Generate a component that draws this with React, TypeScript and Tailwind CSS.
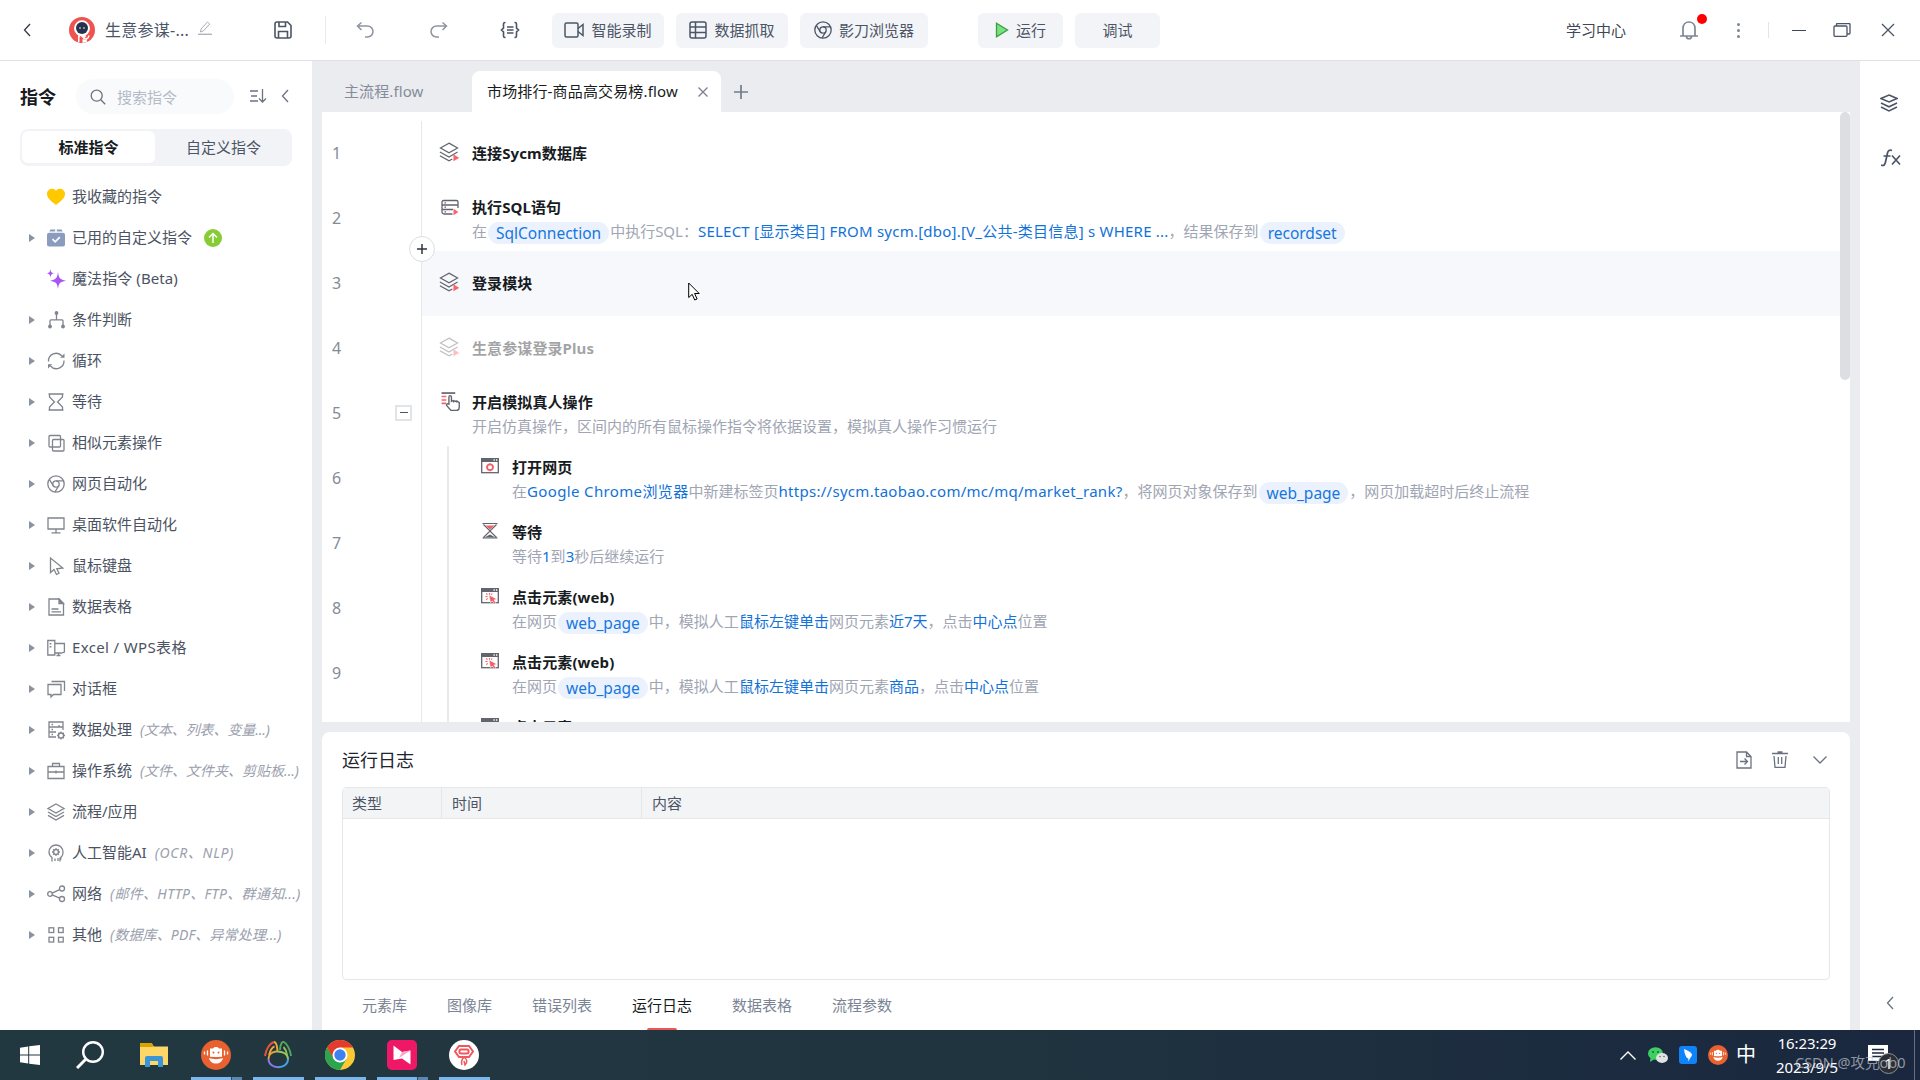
import React from 'react';
import clsx from 'clsx';

type IconProps = { className?: string; children?: React.ReactNode; box?: string };

const Icon: React.FC<IconProps> = ({ className = '', children, box = '0 0 18 18' }) => (
  <svg
    viewBox={box}
    fill="none"
    stroke="currentColor"
    strokeWidth={1.3}
    className={clsx('shrink-0', className || 'w-[18px] h-[18px]')}
  >
    {children}
  </svg>
);

const LayersShape = () => (
  <>
    <path d="M9 1 17 5.5 9 10 1 5.5z" />
    <path d="M1 9l8 4.5L17 9M1 12.4 9 17l8-4.6" />
  </>
);

const ChromeShape = () => (
  <>
    <circle cx="9" cy="9" r="8.2" />
    <circle cx="9" cy="9" r="3.2" />
    <path d="M9 5.8h7.4M6.2 10.6 2.3 4.4M11.8 10.6 8 17" />
  </>
);

const Chevron = ({ className }: { className?: string }) => (
  <Icon box="0 0 8 14" className={className || 'w-2 h-3.5'}>
    <path d="M7 1 1.5 7 7 13" />
  </Icon>
);

interface TreeItem {
  label: string;
  labelClass?: string;
  note?: string;
  noteClass?: string;
  leaf?: boolean;
  badge?: boolean;
  icon: React.ReactNode;
}

const treeItems: TreeItem[] = [
  {
    label: '我收藏的指令',
    leaf: true,
    icon: <path d="M9 17C4 13.2 0 10 0 6c0-5 6-7 9-3.300C12-1 18 1 18 6c0 4-4 7.200-9 11z" fill="#ffc800" stroke="none" />,
  },
  {
    label: '已用的自定义指令',
    badge: true,
    icon: (
      <g stroke="none" fill="#8a9bbd">
        <path d="M3.500.500h4.700v2H2.300zM9.800.500h4.700l1.200 2H9.800z" />
        <rect x="0" y="3.800" width="18" height="13.700" rx="2" />
        <path d="M5.500 10.200l2.700 2.600 4.600-4.600" stroke="#fff" strokeWidth="1.700" fill="none" />
      </g>
    ),
  },
  {
    label: '魔法指令 (Beta)',
    labelClass: 'tracking-[0.08px]',
    leaf: true,
    icon: (
      <g stroke="none" fill="#a855f7">
        <path d="M11 2c.8 6 2 7.700 8 8.700-6 1-7.200 2.300-8 8.300-.8-6-2-7.300-8-8.300 6-1 7.200-2.700 8-8.700z" />
        <path d="M3.500-1c.500 3.200 1 3.900 4 4.300-3 .500-3.500 1.200-4 4.300-.500-3.100-1-3.800-4.300-4.300C2.500 2.900 3 2.200 3.500-1z" />
      </g>
    ),
  },
  {
    label: '条件判断',
    icon: (
      <>
        <path d="M9.500 2.500v6.300M3 15V9.800a1 1 0 0 1 1-1h11a1 1 0 0 1 1 1V15" />
        <g fill="currentColor" stroke="none">
          <circle cx="9.500" cy="2" r="1.900" />
          <circle cx="3" cy="15.500" r="1.900" />
          <circle cx="16" cy="15.500" r="1.900" />
        </g>
      </>
    ),
  },
  {
    label: '循环',
    icon: (
      <>
        <path d="M1.500 9.500A7.700 7.700 0 0 1 15 4M17 8.500A7.700 7.700 0 0 1 3.500 14" />
        <path d="M17.500 1.500v4.300h-4.300zM1 16.500v-4.300h4.300z" fill="currentColor" stroke="none" />
      </>
    ),
  },
  {
    label: '等待',
    icon: <path d="M1.500 1h15M1.500 17h15M2.500 1v3l5 5-5 5v3M15.500 1v3l-5 5 5 5v3" />,
  },
  {
    label: '相似元素操作',
    icon: (
      <>
        <rect x="2" y="1.500" width="11.500" height="11.500" rx="1" />
        <rect x="5.500" y="5.500" width="11.500" height="11.500" rx="1" />
      </>
    ),
  },
  { label: '网页自动化', icon: <ChromeShape /> },
  {
    label: '桌面软件自动化',
    icon: <path d="M1 2h16v11H1zM9 13v3.500M4.500 16.800h9" />,
  },
  {
    label: '鼠标键盘',
    icon: <path d="M3.500 1v14.500l3.500-3 2.500 5 2.500-1.200-2.200-4.500 6-.800z" />,
  },
  {
    label: '数据表格',
    icon: (
      <>
        <path d="M2 1h10l4.500 4.500V17H2z" />
        <path d="M12 1l4.500 4.500H12z" fill="currentColor" />
        <path d="M4.500 11h7M4.500 13.800h9.500" />
      </>
    ),
  },
  {
    label: 'Excel / WPS表格',
    labelClass: 'tracking-[0.36px]',
    icon: (
      <>
        <path d="M.800 1.500h7v14.500h-7zM7.800 4.500h9.600v8.500l-3 1H7.800M9.500 16.500h4M11.500 14v2.500" />
        <path d="M3.500 4v1.500M3.500 7v1.500" strokeWidth="1.800" />
      </>
    ),
  },
  {
    label: '对话框',
    icon: <path d="M1 4.500h13v10H6.500L4 17v-2.500H1zM4.500 1.500h13V11" />,
  },
  {
    label: '数据处理',
    note: '(文本、列表、变量...)',
    noteClass: 'tracking-[-0.1px]',
    icon: (
      <>
        <path d="M9 16H2V1h14v8M2 6h14M2 11h7M4.500 3.500h1.500M4.500 8.500h1.500M4.500 13.500h1.500M12 6v-2" />
        <circle cx="14" cy="14.500" r="2.500" />
        <path d="M14 10.500v1.500M14 17v1.500M10 14.500h1.500M16.500 14.500H18M11.300 11.800l1 1M15.800 16.300l1 1M16.800 11.800l-1 1M12.200 16.300l-1 1" />
      </>
    ),
  },
  {
    label: '操作系统',
    note: '(文件、文件夹、剪贴板...)',
    icon: <path d="M1 4.500h16v12H1zM5.500 4.500v-3h7v3M1 10h16M9 8.500v3" />,
  },
  { label: '流程/应用', icon: <LayersShape /> },
  {
    label: '人工智能AI',
    note: '(OCR、NLP)',
    noteClass: 'tracking-[0.7px]',
    icon: (
      <>
        <path d="M5 17.500v-4C3 12 2 10.500 2 8a7 7 0 0 1 14 0c0 3-1 5-3 6v3.500M13 15h1.500M8 17v-2.500M11 17v-3" />
        <circle cx="9" cy="8" r="2.400" />
        <path d="M9 4v1.600M9 10.400V12M5 8h1.600M11.400 8H13M6.200 5.200l1.100 1.100M10.700 9.700l1.100 1.100M11.800 5.200l-1.100 1.100M7.300 9.700l-1.100 1.100" />
      </>
    ),
  },
  {
    label: '网络',
    note: '(邮件、HTTP、FTP、群通知...)',
    noteClass: 'tracking-[0.32px]',
    icon: (
      <>
        <circle cx="3" cy="9" r="2.300" />
        <circle cx="15" cy="3.500" r="2.500" />
        <circle cx="15" cy="14" r="2.500" />
        <path d="M5.200 8.200 12.600 4.600M5.200 9.800l7.400 3.400" />
      </>
    ),
  },
  {
    label: '其他',
    note: '(数据库、PDF、异常处理...)',
    noteClass: 'tracking-[0.15px]',
    icon: (
      <>
        <rect x="2" y="1.800" width="4.700" height="4.700" />
        <rect x="11.500" y="1.800" width="4.700" height="4.700" />
        <rect x="2" y="11.300" width="4.700" height="4.700" />
        <rect x="11.500" y="11.300" width="4.700" height="4.700" />
      </>
    ),
  },
];

const FlowLayers = () => (
  <Icon className="w-5 h-5 -ml-px">
    <g strokeWidth="1.100">
      <path d="M9 1 16.700 5.400 9 9.800 1.300 5.400z" />
      <path d="M.800 9 9 13.500 16.700 9M.800 12.400 9 17l3-1.700" />
    </g>
    <path d="M13 11l5.200 3.200L13 17.400z" fill="#f9636b" stroke="none" />
  </Icon>
);

const SqlIcon = () => (
  <Icon className="w-[19px] h-[18px] mt-1">
    <path d="M12 15H3.500a2 2 0 0 1-2-2V3a1.500 1.500 0 0 1 1.500-1.500h13a1.500 1.500 0 0 1 1.500 1.500v6M1.500 6h16M1.500 10.500h11M4 3.800h1.500M4 8.200h1.500M4 12.800h1.500" />
    <path d="M13 9.800l4.800 3.200-4.800 3.200z" fill="#f9636b" stroke="none" />
  </Icon>
);

const HumanIcon = () => (
  <Icon className="w-[19px] h-[19px] ml-px">
    <path d="M.500 1h13" strokeWidth="1.600" />
    <path d="M.500 4.200H5M.500 7.500H5M.500 10.800H5" stroke="#f9636b" strokeWidth="1.500" />
    <path d="M7.500 11.500V4.800c0-1.800 2.400-1.800 2.400 0v4l1.600-.800 1.800.800 1.700-.300 2.300 1.500v4.500c0 2-1 3-2.500 3H9.500L5.500 13c-.800-1.500.500-2.300 2-1.500zM12 8v2M14.800 8.500V10" />
  </Icon>
);

const WindowShape = () => (
  <>
    <rect x=".700" y="1.700" width="16.600" height="14" />
    <path d="M0 1h18v4H0z" fill="currentColor" stroke="none" />
    <path d="M12.500 3h1.300M15 3h1.300" stroke="#fff" />
  </>
);

const OpenPageIcon = () => (
  <Icon>
    <WindowShape />
    <circle cx="9" cy="10.200" r="2.900" stroke="#f05f67" strokeWidth="1.700" />
    <path d="M9 6.300v2M9 12.200v2M5 10.200h2M11 10.200h2" stroke="#f05f67" />
  </Icon>
);

const ClickIcon = () => (
  <Icon>
    <WindowShape />
    <path d="M8 8l8 4.200-3 .700 2 3.200-1.700 1-2-3.200-1.800 2z" fill="#f05f67" stroke="#fff" strokeWidth=".500" />
    <path d="M8.500 6v1.700M4.500 9.500h2M5.200 6.500l1.300 1.200M5.300 12.700l1.400-1.300M11.300 6.500 10.200 7.700" stroke="#f05f67" strokeWidth="1.100" />
  </Icon>
);

const WaitIcon = () => (
  <Icon>
    <path d="M1.500 1.500h15M1.500 16h15M2.500 2.500 9 9l6.500-6.500M2.500 15.500 9 9l6.500 6.500" strokeWidth="1.200" />
    <path d="M4.500 3.500h9L9 7.500z" fill="#f05f67" stroke="none" />
    <path d="M3.500 15.500 9 12.500l5.500 3z" fill="currentColor" stroke="none" />
  </Icon>
);

const Chip = ({ children }: { children: string }) => (
  <span className="inline-flex items-center h-[22px] px-2 mx-px rounded-full bg-[#ebf2fd] text-[#1677e0] text-[15.500px] align-middle">
    {children}
  </span>
);

const Blue = ({ children, className }: { children: string; className?: string }) => (
  <span className={clsx('text-[#1172d8]', className)}>{children}</span>
);

const clickDesc = (target: string) => (
  <>
    在网页<Chip>web_page</Chip>中，模拟人工<Blue>鼠标左键单击</Blue>网页元素<Blue>{target}</Blue>，点击
    <Blue>中心点</Blue>位置
  </>
);

interface Step {
  title: string;
  icon: React.ReactNode;
  desc?: React.ReactNode;
  nested?: boolean;
  active?: boolean;
  disabled?: boolean;
  fold?: boolean;
  last?: boolean;
}

const steps: Step[] = [
  { title: '连接Sycm数据库', icon: <FlowLayers /> },
  {
    title: '执行SQL语句',
    icon: <SqlIcon />,
    desc: (
      <>
        在<Chip>SqlConnection</Chip>中执行SQL：
        <Blue className="tracking-[0.23px]">
          SELECT [显示类目] FROM sycm.[dbo].[V_公共-类目信息] s WHERE ...
        </Blue>
        ，结果保存到<Chip>recordset</Chip>
      </>
    ),
  },
  { title: '登录模块', icon: <FlowLayers />, active: true },
  { title: '生意参谋登录Plus', icon: <FlowLayers />, disabled: true },
  {
    title: '开启模拟真人操作',
    icon: <HumanIcon />,
    desc: '开启仿真操作，区间内的所有鼠标操作指令将依据设置，模拟真人操作习惯运行',
    fold: true,
  },
  {
    title: '打开网页',
    icon: <OpenPageIcon />,
    nested: true,
    desc: (
      <>
        在<Blue className="tracking-[0.36px]">Google Chrome浏览器</Blue>中新建标签页
        <Blue className="tracking-[0.28px]">https://sycm.taobao.com/mc/mq/market_rank?</Blue>
        ，将网页对象保存到<Chip>web_page</Chip>，网页加载超时后终止流程
      </>
    ),
  },
  {
    title: '等待',
    icon: <WaitIcon />,
    nested: true,
    desc: (
      <>
        等待<Blue>1</Blue>到<Blue>3</Blue>秒后继续运行
      </>
    ),
  },
  { title: '点击元素(web)', icon: <ClickIcon />, nested: true, desc: clickDesc('近7天') },
  { title: '点击元素(web)', icon: <ClickIcon />, nested: true, desc: clickDesc('商品') },
  { title: '点击元素(web)', icon: <ClickIcon />, nested: true, desc: clickDesc('商品'), last: true },
];

const StepRow = ({ step, index }: { step: Step; index: number }) => (
  <div className="flex h-[65px] shrink-0">
    <div className="relative w-[100px] border-r border-[#e6e8ec] pl-2.5 pb-0.5 flex items-center text-[16px] text-[#858b96] shrink-0">
      {!step.last && index + 1}
      {step.fold && (
        <span className="ml-auto mr-[9px] w-[17px] h-4 border-2 border-[#e2e4e8] flex items-center justify-center">
          <span className="w-2 h-px bg-[#4b5563]" />
        </span>
      )}
      {step.active && (
        <span className="absolute -right-3.5 -top-[15px] z-10 w-[26px] h-[26px] rounded-full border border-[#dcdee3] bg-white flex items-center justify-center text-[#30353d]">
          <Icon box="0 0 10 10" className="w-2.5 h-2.5">
            <path d="M5 0v10M0 5h10" strokeWidth="1.500" />
          </Icon>
        </span>
      )}
    </div>
    <div className={clsx('flex flex-1 pl-[18px]', step.active && 'bg-[#f7f8fc]')}>
      {step.nested && <div className="ml-[7px] mr-[31px] w-0.5 bg-[#e8e9ed]" />}
      <div className={clsx('flex flex-1', step.disabled && 'opacity-40')}>
        <div
          className={clsx(
            'flex h-[22px] w-8 items-center text-[#62656e]',
            step.desc ? 'mt-[9px]' : 'mt-5',
            step.nested && 'pl-px',
          )}
        >
          {step.icon}
        </div>
        <div className={clsx(step.desc ? 'pt-2.5' : 'pt-[21px]')}>
          <div className="text-[15px] leading-[22px] font-bold text-[#171b22] tracking-[0.1px]">{step.title}</div>
          {step.desc && (
            <div className="mt-px h-6 text-[15px] leading-6 text-[#a0a5b3] whitespace-nowrap">{step.desc}</div>
          )}
        </div>
      </div>
    </div>
  </div>
);

const ToolButton = ({ icon, label, className }: { icon?: React.ReactNode; label: string; className: string }) => (
  <button
    className={clsx(
      'h-[35px] rounded-md bg-[#f3f4f8] flex items-center justify-center gap-[7px] text-[15px] text-[#4b5566] shrink-0',
      className,
    )}
  >
    {icon}
    {label}
  </button>
);

const Header = () => (
  <header className="h-[61px] shrink-0 border-b border-[#e0e1e4] bg-white flex items-center pl-[23px] text-[#4b5566]">
    <Chevron className="w-2 h-3.5 text-[#333b48]" />
    <svg viewBox="0 0 26 26" className="w-[26px] h-[26px] ml-[38px] shrink-0">
      <circle cx="13" cy="13" r="13" fill="#ef5350" />
      <circle cx="13" cy="11.300" r="8" fill="#fff" />
      <path d="M9 18.500h8l1 6.500-5 1-4-1z" fill="#fff" />
      <circle cx="13" cy="11" r="6" fill="#26324d" />
      <circle cx="11" cy="11" r=".800" fill="#fff" />
      <circle cx="15" cy="11" r=".800" fill="#fff" />
      <path d="M10.500 20v6h3v-4l3 1 1.500-4-3.500 2.500-3-2.500z" fill="#ef5350" />
      <path d="M14.500 21c2 2 5 1 5.500-2.500" stroke="#fff" strokeWidth="1.500" fill="none" />
    </svg>
    <span className="ml-2.5 w-[93px] text-[16px] whitespace-nowrap shrink-0 tracking-[0.25px]">生意参谋-...</span>
    <Icon box="0 0 14 14" className="w-3.5 h-3.5 -mt-1 text-[#a9aeb8]">
      <path d="M2.500 11l.500-3L9.500 1l2.300 2-6.500 7z" strokeWidth="1" />
      <path d="M0 13.300h14" />
    </Icon>
    <Icon className="w-[18px] h-[18px] ml-[62px]">
      <path d="M1 3a2 2 0 0 1 2-2h10.500L17 4.500V15a2 2 0 0 1-2 2H3a2 2 0 0 1-2-2zM5 1v4.500h6.500V1M4.500 17v-6.500h9V17" strokeWidth="1.600" />
    </Icon>
    <div className="ml-[33px] w-px h-7 bg-[#e8e9ec]" />
    <Icon className="w-[18px] h-[18px] ml-[30px] mr-px text-[#8e95a1]">
      <path d="M5.500 1.500 1.500 5l4 4M1.500 5h10a5 5 0 0 1 0 11H9" strokeWidth="1.500" />
    </Icon>
    <Icon className="w-[18px] h-[18px] ml-[55px] text-[#8e95a1]">
      <path d="M12.500 1.500l4 3.500-4 4M16.500 5h-10a5 5 0 0 0 0 11H9" strokeWidth="1.500" />
    </Icon>
    <Icon box="0 0 20 18" className="w-5 h-[18px] ml-[52px]">
      <path
        d="M5.500 1.500H5A1.500 1.500 0 0 0 3.500 3v4.200L1.500 9l2 1.800V15A1.500 1.500 0 0 0 5 16.500h.500M14.500 1.500h.500A1.500 1.500 0 0 1 16.500 3v4.200l2 1.800-2 1.800V15a1.500 1.500 0 0 1-1.500 1.500h-.500M7 6h6.500M7 9h6.500M7 12h6.500"
        strokeWidth="1.600"
      />
    </Icon>
    <ToolButton
      className="w-28 ml-8 mr-3"
      label="智能录制"
      icon={
        <Icon box="0 0 20 18" className="w-5 h-[18px]">
          <rect x="1" y="2" width="13" height="14" rx="1.500" strokeWidth="1.500" />
          <path d="M14 7.500l5-4v11l-5-4" strokeWidth="1.500" />
        </Icon>
      }
    />
    <ToolButton
      className="w-28 mr-3"
      label="数据抓取"
      icon={
        <Icon>
          <rect x="1" y="1" width="16" height="16" rx="2" strokeWidth="1.500" />
          <path d="M1 6h16M1 11.500h16M6.500 1v16" strokeWidth="1.500" />
        </Icon>
      }
    />
    <ToolButton
      className="w-32 mr-[50px]"
      label="影刀浏览器"
      icon={
        <Icon>
          <ChromeShape />
        </Icon>
      }
    />
    <ToolButton
      className="w-[85px] mr-3"
      label="运行"
      icon={
        <Icon box="0 0 14 16" className="w-3.5 h-4">
          <path d="M1.500 1.200 12.500 8l-11 6.800z" fill="#7be07f" stroke="#36a043" />
        </Icon>
      }
    />
    <ToolButton className="w-[85px]" label="调试" />
    <span className="ml-auto text-[15px] text-[#3f4754]">学习中心</span>
    <div className="relative ml-[53px]">
      <Icon box="0 0 20 20" className="w-5 h-5 text-[#7d8694]">
        <path d="M4 16V8.500C4 4.500 6.500 2 10 2s6 2.500 6 6.500V16M1 16h18M7.500 16.500c0 3 5 3 5 0" strokeWidth="1.700" />
      </Icon>
      <span className="absolute -top-1.5 left-[18px] w-2.5 h-2.5 rounded-full bg-[#fe0000]" />
    </div>
    <div className="ml-[38px] flex flex-col gap-[3px]">
      <i className="w-[3px] h-[3px] rounded-full bg-[#7d8694]" />
      <i className="w-[3px] h-[3px] rounded-full bg-[#7d8694]" />
      <i className="w-[3px] h-[3px] rounded-full bg-[#7d8694]" />
    </div>
    <div className="ml-7 w-px h-4 bg-[#e3e5e8]" />
    <div className="ml-[23px] w-3.5 h-px bg-[#3f4754]" />
    <Icon box="0 0 18 14" className="w-[18px] h-3.5 ml-[27px]">
      <rect x="1" y="3" width="13" height="10.300" rx="1" />
      <path d="M3.500 3V1.500a1 1 0 0 1 1-1H16a1 1 0 0 1 1 1v8.500a1 1 0 0 1-1 1h-2" />
    </Icon>
    <Icon box="0 0 14 14" className="w-3.5 h-3.5 ml-[30px] mr-[25px]">
      <path d="M1 1l12 12M13 1 1 13" />
    </Icon>
  </header>
);

const Sidebar = () => (
  <aside className="w-[312px] shrink-0 bg-white overflow-hidden">
    <div className="flex items-center mt-[18px] h-[35px] pl-5">
      <h1 className="text-[18px] font-bold text-[#171b22] pt-0.5">指令</h1>
      <div className="ml-5 w-[158px] h-[35px] rounded-full bg-[#f9fafc] flex items-center pl-3.5">
        <Icon box="0 0 16 16" className="w-4 h-4 text-[#6b7280]">
          <circle cx="6.700" cy="6.700" r="5.500" />
          <path d="M10.800 10.800 15.200 15.200" />
        </Icon>
        <span className="ml-[11px] pt-px text-[15px] text-[#b4bbc9]">搜索指令</span>
      </div>
      <Icon box="0 0 18 14" className="w-[18px] h-3.5 ml-[15px] -mt-0.5 text-[#6b7280]">
        <path d="M1 2h8M2 7h6M1 12h8M13.500 0v13M10 9.500l3.500 3.500L17 9.500" />
      </Icon>
      <Chevron className="w-2 h-3.5 ml-3.5 -mt-0.5 text-[#6b7280]" />
    </div>
    <div className="mx-5 mt-[15px] w-[272px] h-[37px] rounded-lg bg-[#f2f3f7] p-0.5 pb-[3px] flex text-[15px]">
      <div className="w-[133px] rounded-md bg-white flex items-center justify-center font-semibold text-[#171b22]">
        标准指令
      </div>
      <div className="flex-1 flex items-center justify-center pl-0.5 text-[#4b5566]">自定义指令</div>
    </div>
    <ul className="mt-2.5">
      {treeItems.map((item) => (
        <li key={item.label} className="h-[41px] flex items-center pl-[29px] whitespace-nowrap">
          <svg viewBox="0 0 6 8" className="w-1.5 h-2 shrink-0">
            {!item.leaf && <path d="M0 0l6 4-6 4z" fill="#8b93a1" />}
          </svg>
          <Icon className="w-[18px] h-[18px] ml-3 text-[#80848d] overflow-visible">{item.icon}</Icon>
          <span className={clsx('ml-[7px] text-[15px] text-[#4b5362]', item.labelClass)}>{item.label}</span>
          {item.note && (
            <span className={clsx('ml-2 text-[14px] italic text-[#9aa0ad]', item.noteClass)}>{item.note}</span>
          )}
          {item.badge && (
            <Icon className="w-[18px] h-[18px] ml-3">
              <circle cx="9" cy="9" r="9" fill="#85cc35" stroke="none" />
              <path d="M9 14V5M5 8.500l4-4 4 4" stroke="#fff" strokeWidth="1.500" />
            </Icon>
          )}
        </li>
      ))}
    </ul>
  </aside>
);

const TabStrip = () => (
  <div className="h-[51px] flex items-end shrink-0 text-[15px]">
    <div className="w-[150px] h-[41px] pl-[22px] flex items-center text-[#858b99] tracking-[0.1px]">主流程.flow</div>
    <div className="w-[249px] h-[41px] pl-[15px] rounded-t-lg bg-white flex items-center text-[#171b22] whitespace-nowrap">
      <span className="w-[211px] tracking-[0.15px]">市场排行-商品高交易榜.flow</span>
      <Icon box="0 0 10 10" className="w-2.5 h-2.5 text-[#7b818c]">
        <path d="M.500.500l9 9M9.500.500l-9 9" />
      </Icon>
    </div>
    <div className="h-[41px] pl-3 flex items-center">
      <Icon box="0 0 16 16" className="w-4 h-4 text-[#737c8c]">
        <path d="M8 1v14M1 8h14" strokeWidth="1.700" />
      </Icon>
    </div>
  </div>
);

const FlowCanvas = () => (
  <section className="relative h-[610px] shrink-0 bg-white overflow-hidden flex">
    <div className="flex-1 flex flex-col pt-[9px]">
      {steps.map((step, i) => (
        <StepRow key={i} step={step} index={i} />
      ))}
    </div>
    <div className="w-2.5 h-[268px] rounded-full bg-[#dcdee2]" />
    <svg viewBox="0 0 12 19" className="absolute left-[366px] top-[170px] w-3 h-[19px]">
      <path d="M.700 1v14.500l3.500-3.200 2.500 5.700 2.400-1-2.500-5.500h4.600z" fill="#fff" stroke="#000" />
    </svg>
  </section>
);

const logTabs = ['元素库', '图像库', '错误列表', '运行日志', '数据表格', '流程参数'];

const LogPanel = () => (
  <section className="mt-2.5 flex-1 rounded-t-lg bg-white px-5 overflow-hidden">
    <div className="h-[55px] flex items-center">
      <h2 className="text-[18px] text-[#20242c] pt-0.5">运行日志</h2>
      <Icon box="0 0 16 18" className="w-4 h-[18px] ml-auto text-[#6a7282]">
        <path d="M1 1h9.500L15 5.500V17H1zM10.500 1v4.500H15M4 10.500h7M8.500 7.500l3 3-3 3" />
      </Icon>
      <Icon box="0 0 16 17" className="w-4 h-[17px] ml-5 text-[#6a7282]">
        <path d="M0 2.500h16M2 5l1 11.300h10L14 5M6.300 6v7M9.700 6v7" />
        <path d="M5.500 1.200h5" strokeWidth="2" />
      </Icon>
      <Icon box="0 0 14 8" className="w-3.5 h-2 ml-[25px] mr-[3px] text-[#6a7282]">
        <path d="M.500.500 7 7l6.500-6.500" />
      </Icon>
    </div>
    <div className="h-[193px] border border-[#e5e7eb] rounded">
      <div className="h-[31px] flex items-center bg-[#f3f4f6] border-b border-[#e5e7eb] text-[15px] text-[#4b5566]">
        <div className="w-[99px] h-full border-r border-[#e5e7eb] pl-[9px] flex items-center">类型</div>
        <div className="w-[200px] h-full border-r border-[#e5e7eb] pl-2.5 flex items-center">时间</div>
        <div className="pl-2.5">内容</div>
      </div>
    </div>
    <div className="flex h-[50px] gap-10 pl-5 text-[15px] text-[#7b8494]">
      {logTabs.map((tab) => (
        <div
          key={tab}
          className={clsx('flex flex-col items-center justify-between', tab === '运行日志' && 'text-[#171b22]')}
        >
          <span className="mt-3.5 leading-[22px]">{tab}</span>
          {tab === '运行日志' && <span className="w-[30px] h-0.5 rounded-t bg-[#e95757]" />}
        </div>
      ))}
    </div>
  </section>
);

const RightRail = () => (
  <aside className="w-[60px] shrink-0 bg-white flex flex-col items-center pr-0.5 text-[#4b5566]">
    <Icon className="w-[18px] h-[18px] mt-[33px]">
      <path d="M9 1l8 3.500L9 8 1 4.500zM1 9l8 3.800L17 9M1 13l8 4 8-4" strokeWidth="1.500" />
    </Icon>
    <Icon box="0 0 20 18" className="w-5 h-[18px] mt-[37px] ml-1">
      <path d="M0 16c3 1.500 4-.500 4.500-3L6.500 4C7 1.500 8.500.700 11 1.500M2.500 7h7M11 6.500l8 9M19 6.500l-8 9" strokeWidth="1.700" />
    </Icon>
    <Chevron className="w-2 h-3.5 mt-auto mb-5 ml-px text-[#6b7280]" />
  </aside>
);

const MonkeyIcon = ({ className }: { className: string }) => (
  <svg viewBox="0 0 30 30" className={className}>
    <circle cx="15" cy="15" r="15" fill="#e8612f" />
    <path d="M3.500 11.500v3M6.500 10.500v5M23.500 10.500v5M26.500 11.500v3" stroke="#fff" strokeWidth="1.300" />
    <path d="M12 8.500l1.500-1.500h3L18 8.500h3V17H9V8.500z" fill="#fff" />
    <path d="M8 18c4 1.500 10 1.500 14 0-.500 3.500-3.500 5.500-7 5.500s-6.500-2-7-5.500z" fill="#fff" />
    <circle cx="12.500" cy="12.500" r="1" fill="#e8612f" />
    <circle cx="17.500" cy="12.500" r="1" fill="#e8612f" />
    <path d="M9 17.300h3M18 17.300h3" stroke="#e8612f" strokeWidth=".800" />
  </svg>
);

const apps = [
  { id: 'monkey', stacked: true, icon: <MonkeyIcon className="w-[30px] h-[30px]" /> },
  {
    id: 'navicat',
    icon: (
      <svg viewBox="0 0 30 30" className="w-[30px] h-[30px]" fill="none" strokeWidth="1.900">
        <path d="M2 16C3 9 7 3 11 2" stroke="#e8553a" />
        <path d="M11 2c3 0 3 5 3.500 9M6 15c1.500-5 3.500-8 5.500-8.500" stroke="#f2a93b" />
        <path d="M17 10c0-5 2-9 4-8s6 6 7 14" stroke="#57a75a" />
        <path d="M20.500 7c2 2 3 4 3.500 8" stroke="#8fbf57" />
        <path d="M13 11.500c-5 .500-7.500 4-7.500 7.500" stroke="#efa03c" />
        <path d="M5.500 19c0 5 4.500 8.300 9.500 8.300" stroke="#8d7ae6" />
        <path d="M15 27.300c6 0 10-3.300 10-8.300" stroke="#4aa3e8" />
        <path d="M25 19c0-5-5-8-12-7.500" stroke="#9ac65a" />
      </svg>
    ),
  },
  {
    id: 'chrome',
    icon: (
      <svg viewBox="0 0 30 30" className="w-[30px] h-[30px]">
        <circle cx="15" cy="15" r="15" fill="#fcc934" />
        <path d="M2 7.500a15 15 0 0 1 26 0H15l-7 11z" fill="#e33b2e" />
        <path d="M2 7.500 8.500 18.800 15 22.500 21.500 18.800 15 30A15 15 0 0 1 2 7.500z" fill="#2da44e" />
        <circle cx="15" cy="15" r="7.500" fill="#fff" />
        <circle cx="15" cy="15" r="5.700" fill="#3d82f0" />
      </svg>
    ),
  },
  {
    id: 'player',
    stacked: true,
    icon: (
      <svg viewBox="0 0 30 30" className="w-[30px] h-[30px]">
        <rect width="30" height="30" rx="5" fill="#ef1867" />
        <path d="M6.500 5.500 15 12l8.500-1.500v14L15 18.500 6.500 20z" fill="#fff" />
        <path d="M15 12l8.500-1.500L12 18z" fill="#f7a8c5" />
      </svg>
    ),
  },
  {
    id: 'shadow',
    icon: (
      <svg viewBox="0 0 30 30" className="w-[30px] h-[30px]" fill="none" stroke="#f0575f">
        <circle cx="15" cy="15" r="15" fill="#fff" stroke="none" />
        <path d="M10 6h10l4 5.500-4 5.500H10l-4-5.500z" strokeWidth="2" />
        <rect x="10.500" y="9.500" width="9" height="4" rx="1.500" strokeWidth="2" />
        <path d="M15 17c-3 3-3 5-2 8M15 17c3 2 4 5 1 8l-1-4" strokeWidth="1.500" />
      </svg>
    ),
  },
];

const Taskbar = () => (
  <footer className="relative h-[50px] shrink-0 bg-linear-to-r from-[#223840] via-[#20343f] to-[#1a273f] flex items-center pl-5 text-white">
    <svg viewBox="0 0 20 20" className="w-5 h-5 shrink-0" fill="#fff">
      <path d="M0 2.700 8.200 1.500v8H0zM9.200 1.300 20 0v9.500H9.200zM0 10.500h8.200v8L0 17.300zM9.200 10.500H20V20L9.200 18.700z" />
    </svg>
    <svg viewBox="0 0 28 28" className="w-7 h-7 ml-9 shrink-0" fill="none" stroke="#fff" strokeWidth="2.400">
      <circle cx="17" cy="11" r="9.800" />
      <path d="M10 18 1 27" strokeWidth="3" />
    </svg>
    <svg viewBox="0 0 28 24" className="w-7 h-6 ml-9 shrink-0">
      <path d="M0 1h12l2 2.500h14V22H0z" fill="#fcd667" />
      <path d="M0 0h12l1.500 4H0z" fill="#d9a300" />
      <path d="M5 24V15a2 2 0 0 1 2-2h14a2 2 0 0 1 2 2v9h-5v-6h-8v6z" fill="#3a94d8" />
    </svg>
    <div className="flex ml-[23px] gap-[11px] h-full">
      {apps.map((app) => (
        <div key={app.id} className="w-[51px] h-full flex flex-col items-start justify-between">
          <div className="mt-2.5 ml-2.5">{app.icon}</div>
          <div className="flex w-full h-[3px] bg-[#7ab7ec]">
            {app.stacked && <span className="ml-auto w-[11px] bg-[#5a87b4] border-l border-[#2d4a5c]" />}
          </div>
        </div>
      ))}
    </div>
    <Icon box="0 0 16 9" className="w-4 h-[9px] ml-auto">
      <path d="M.500 8.500 8 1l7.500 7.500" strokeWidth="1.400" />
    </Icon>
    <svg viewBox="0 0 20 17" className="w-5 h-[17px] ml-3 shrink-0">
      <ellipse cx="7.500" cy="6.500" rx="7.500" ry="6.300" fill="#3fce62" />
      <path d="M2.500 11l-.500 4 4-2.500z" fill="#3fce62" />
      <ellipse cx="14" cy="11" rx="6" ry="5" fill="#dfe3e4" />
      <circle cx="5" cy="5" r="1" fill="#1b6a34" />
      <circle cx="10" cy="5" r="1" fill="#1b6a34" />
      <circle cx="12" cy="9.500" r=".800" fill="#666" />
      <circle cx="16" cy="9.500" r=".800" fill="#666" />
    </svg>
    <svg viewBox="0 0 18 18" className="w-[18px] h-[18px] ml-[11px] shrink-0">
      <rect width="18" height="18" rx="3" fill="#0f83fa" />
      <path d="M5 3c4 2 7 3 8 5.500 0 2-2 3-2 4l-2 3 .500-3C7 12 7 10 6.500 9.500L5.500 6.500z" fill="#fff" />
    </svg>
    <MonkeyIcon className="w-5 h-5 ml-[11px] shrink-0" />
    <span className="ml-2 w-5 text-[20px] leading-none">中</span>
    <div className="ml-[18px] w-[66px] -mt-px text-[15px] leading-6 whitespace-nowrap flex flex-col items-center">
      <span className="tracking-[-0.1px]">16:23:29</span>
      <span className="tracking-[-0.1px]">2023/9/5</span>
    </div>
    <div className="relative ml-7 mr-8">
      <svg viewBox="0 0 20 20" className="w-5 h-5" fill="none">
        <path d="M0 0h20v16h-5v4l-4-4H0z" fill="#fff" />
        <path d="M4 4.500h12M4 8h12M4 11.500h12" stroke="#1a273f" strokeWidth="1.400" />
      </svg>
      <span className="absolute left-2.5 top-2 w-[21px] h-[21px] rounded-full border border-[#8d9096] bg-[#2b2e35] flex items-center justify-center text-[15px] leading-none">
        1
      </span>
    </div>
    <span className="absolute right-[5px] h-full w-px bg-[#66717f]" />
    <span className="absolute left-[1795px] top-[21px] text-[14.500px] leading-[22px] text-[#c4c8cf]/70 whitespace-nowrap">
      CSDN @攻克ob0
    </span>
  </footer>
);

const App: React.FC = () => (
  <div className="w-[1920px] h-[1080px] overflow-hidden flex flex-col bg-[#ebecf0] font-['Noto_Sans','Noto_Sans_CJK_SC',sans-serif]">
    <Header />
    <div className="flex flex-1 min-h-0">
      <Sidebar />
      <main className="ml-2.5 mr-2.5 flex-1 min-w-0 flex flex-col">
        <TabStrip />
        <FlowCanvas />
        <LogPanel />
      </main>
      <RightRail />
    </div>
    <Taskbar />
  </div>
);

export default App;
